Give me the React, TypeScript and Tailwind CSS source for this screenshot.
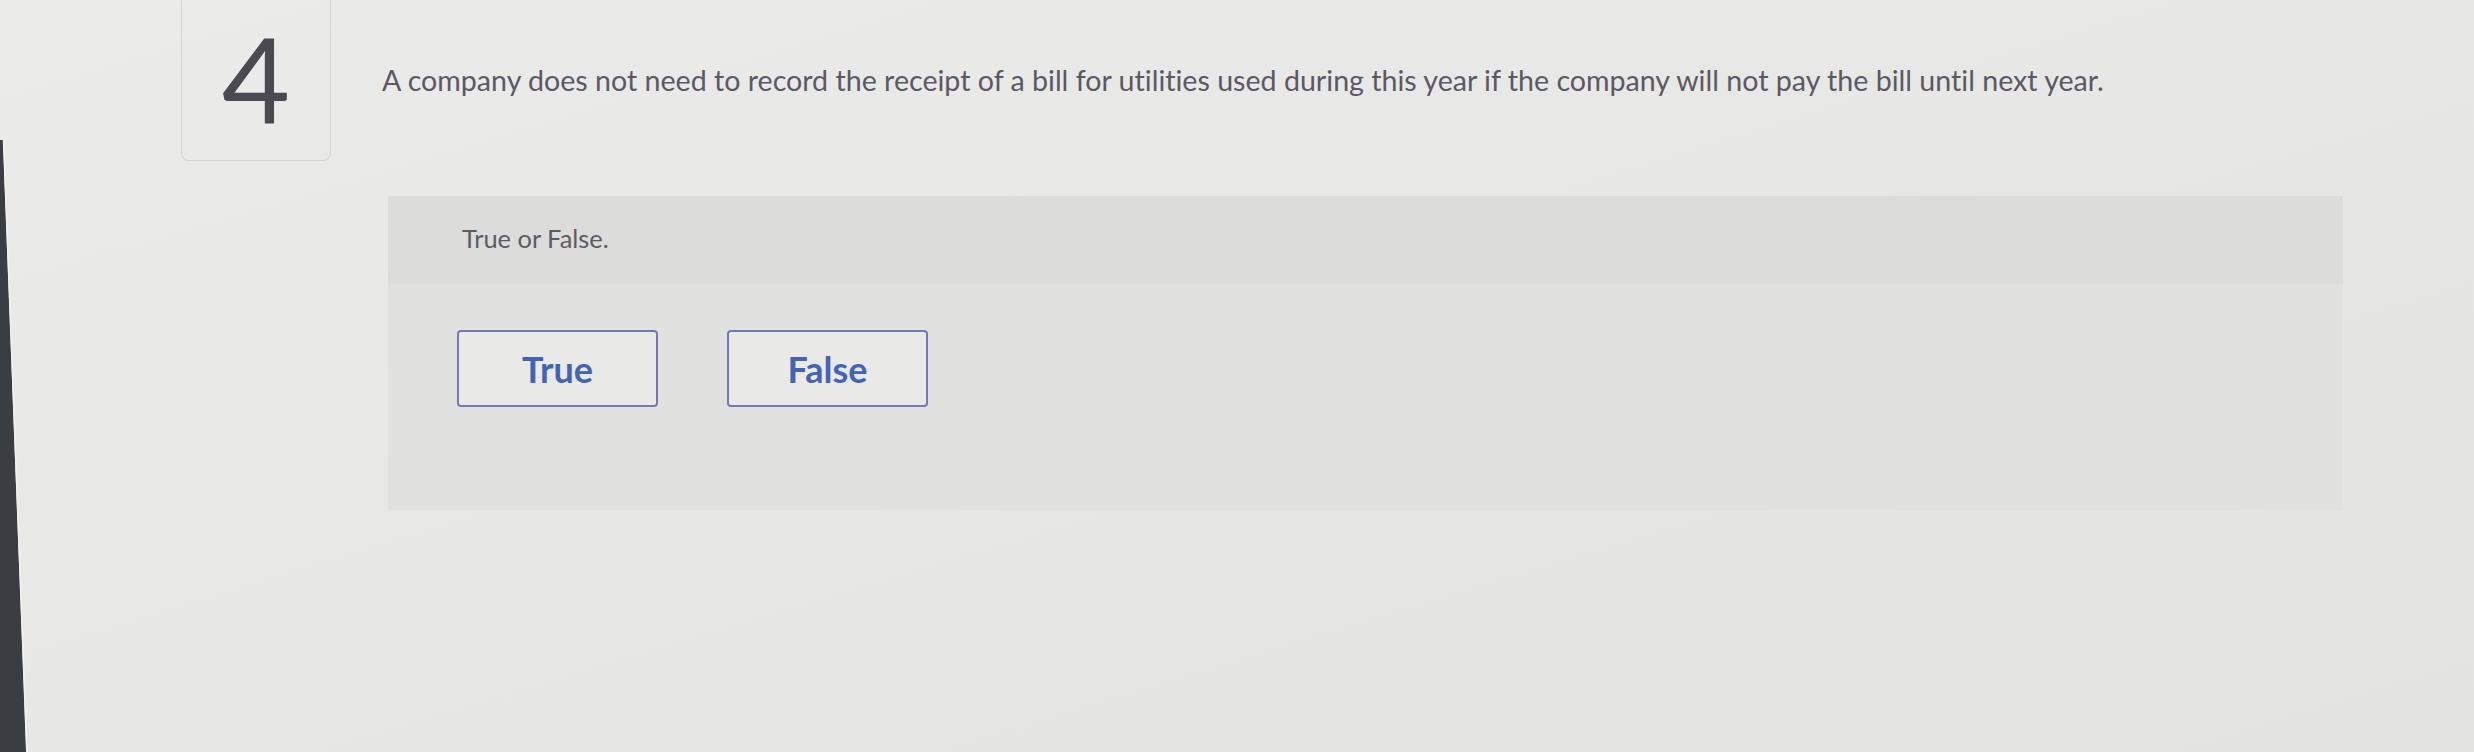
import React from 'react'

const font = { fontFamily: '"Lato", "Liberation Sans", sans-serif' }

function AnswerButton({ label }: { label: string }) {
  return (
    <button
      className="w-[201px] h-[77px] rounded-[4px] border-2 border-[#7478b6] bg-[#e9e9e7] text-[36px] font-bold text-[#4563b5] flex items-center justify-center"
    >
      {label}
    </button>
  )
}

export default function App() {
  return (
    <div
      className="relative w-[2474px] h-[752px] overflow-hidden bg-gradient-to-br from-[#ebebe9] via-[#e7e7e5] to-[#e3e3e1] [font-variant-ligatures:none]"
      style={font}
    >
      {/* monitor bezel on the left edge of the photo */}
      <svg className="absolute left-0 top-0" width="30" height="752" viewBox="0 0 30 752">
        <polygon points="0,140 3,140 26,752 0,752" fill="#3a3d42" />
        <line x1="3.5" y1="140" x2="27" y2="752" stroke="#f4f0f0" strokeWidth="1.5" />
      </svg>

      <div className="flex pl-[181px]">
        <div className="w-[150px] h-[161px] shrink-0 border border-t-0 border-[#d4d4d2] rounded-b-[8px] flex items-start justify-center pt-[19px]">
          <span className="text-[118px] leading-[1] font-normal text-[#4a4a50]">4</span>
        </div>

        <div className="ml-[51px] flex-1 pr-[131px]">
          <p className="mt-[62px] text-[28.6px] leading-[36px] text-[#5a5964]">
            A company does not need to record the receipt of a bill for utilities used during this year if the company will not pay the bill until next year.
          </p>

          <div className="mt-[98px] ml-[6px] bg-[#e1e1df]">
            <div className="h-[88px] bg-[#dcdcda] flex items-center pl-[74px] pb-[4px]">
              <span className="text-[25.4px] text-[#5c5b64]">True or False.</span>
            </div>
            <div className="h-[226px] pl-[69px] pt-[46px] flex items-start gap-[69px]">
              <AnswerButton label="True" />
              <AnswerButton label="False" />
            </div>
          </div>
        </div>
      </div>
    </div>
  )
}
